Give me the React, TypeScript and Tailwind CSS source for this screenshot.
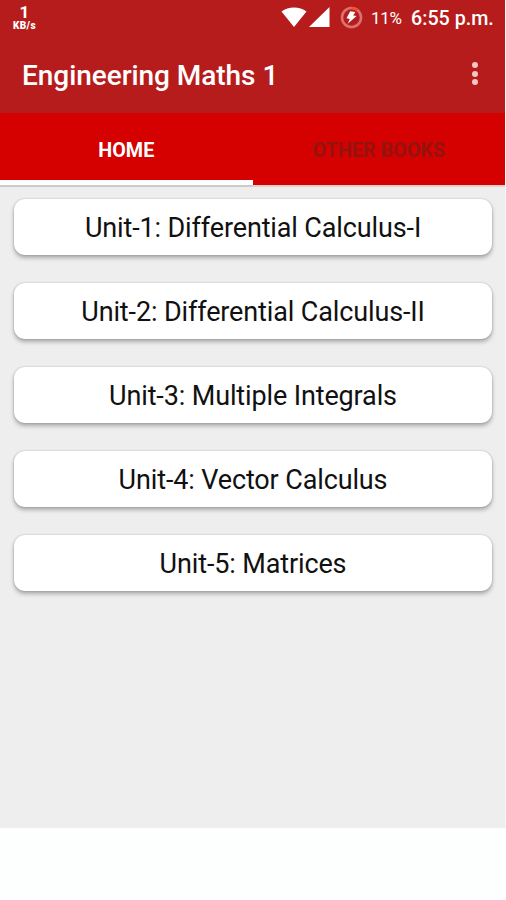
const UNITS = [
  { id: 1, title: 'Unit-1: Differential Calculus-I' },
  { id: 2, title: 'Unit-2: Differential Calculus-II' },
  { id: 3, title: 'Unit-3: Multiple Integrals' },
  { id: 4, title: 'Unit-4: Vector Calculus' },
  { id: 5, title: 'Unit-5: Matrices' },
];

export default function App() {
  return (
    <div className="flex h-[900px] w-[506px] flex-col overflow-hidden bg-[#fcfffe] font-['Roboto',sans-serif]">
      <div className="flex h-[828px] flex-col border-r border-[#f6f6f6] bg-[#eeeeee]">
        <header className="h-[113px] shrink-0 bg-[#b71c1c] text-white">
          <StatusBar />
          <AppBar />
        </header>
        <TabBar />
        <main className="flex flex-col gap-[28px] pt-[12px] pr-[13px] pl-[14px]">
          {UNITS.map((unit) => (
            <UnitCard key={unit.id} title={unit.title} />
          ))}
        </main>
      </div>
    </div>
  );
}

// Network speed, signal, battery and clock
function StatusBar() {
  return (
    <div className="flex h-[36px] items-center justify-between pr-[10px] pl-[12px]">
      <div className="flex w-[25px] flex-col items-center font-bold">
        <span className="text-[17px] leading-[15px]">1</span>
        <span className="text-[10px] leading-[11px] font-black tracking-[0.4px]">KB/s</span>
      </div>
      <div className="flex items-center">
        <svg className="mb-[2px] h-[20px] w-[26px]" viewBox="0 0 26 20" fill="#fff">
          <path d="M.5 4.5C7.5-1 18.5-1 25.5 4.5L13 20Z" />
        </svg>
        <svg className="mb-[2px] ml-[2px] h-[20px] w-[21px]" viewBox="0 0 21 20" fill="#fff">
          <path d="M20.5 0V20H0Z" />
        </svg>
        <svg className="mb-px ml-[10px] h-[23px] w-[23px]" viewBox="0 0 23 23" fill="none">
          <circle cx="11.5" cy="11.5" r="9.5" stroke="#db7070" strokeWidth="2.6" />
          <path d="M11.5 2A9.5 9.5 0 0 1 17.4 4.1" stroke="#f4502c" strokeWidth="2.6" />
          <path d="M10.2 5.2L15.4 6L13.2 9.5L16.6 10.1L7.7 17.8L9.8 13.1L6.5 12.3Z" fill="#fff" />
        </svg>
        <span className="ml-[8px] w-[31px] pt-px text-[17px] tracking-[-0.3px] whitespace-nowrap">11%</span>
        <span className="ml-[9px] w-[84px] pt-px text-[19.7px] font-medium whitespace-nowrap">6:55 p.m.</span>
      </div>
    </div>
  );
}

function AppBar() {
  return (
    <div className="flex h-[77px] items-center justify-between pr-[27px] pl-[22px]">
      <h1 className="pt-[2px] text-[28px] font-medium tracking-[-0.05px]">Engineering Maths 1</h1>
      <button aria-label="More options" className="flex flex-col gap-[2.5px] pb-[2px]">
        <span className="h-[6px] w-[6px] rounded-full bg-[#f5c6c6]" />
        <span className="h-[6px] w-[6px] rounded-full bg-[#f5c6c6]" />
        <span className="h-[6px] w-[6px] rounded-full bg-[#f5c6c6]" />
      </button>
    </div>
  );
}

function TabBar() {
  return (
    <nav className="grid h-[74px] shrink-0 grid-cols-2 bg-[#d50000] text-[19.8px] font-bold">
      <button className="flex h-[74px] items-center justify-center border-b-2 border-[#c9cccb] pt-[4px] text-white shadow-[inset_0_-5px_0_#fff]">
        HOME
      </button>
      <button className="flex h-[74px] items-center justify-center border-b-2 border-[#e3cfce] pt-[4px] text-[#93140f]">
        OTHER BOOKS
      </button>
    </nav>
  );
}

function UnitCard({ title }: { title: string }) {
  return (
    <button className="flex h-[56px] w-full items-center justify-center rounded-[11px] bg-white pt-[3px] text-[27px] tracking-[-0.13px] text-[#111] shadow-[0_0_2px_rgba(0,0,0,0.25),0_3px_4px_rgba(0,0,0,0.28)]">
      {title}
    </button>
  );
}
